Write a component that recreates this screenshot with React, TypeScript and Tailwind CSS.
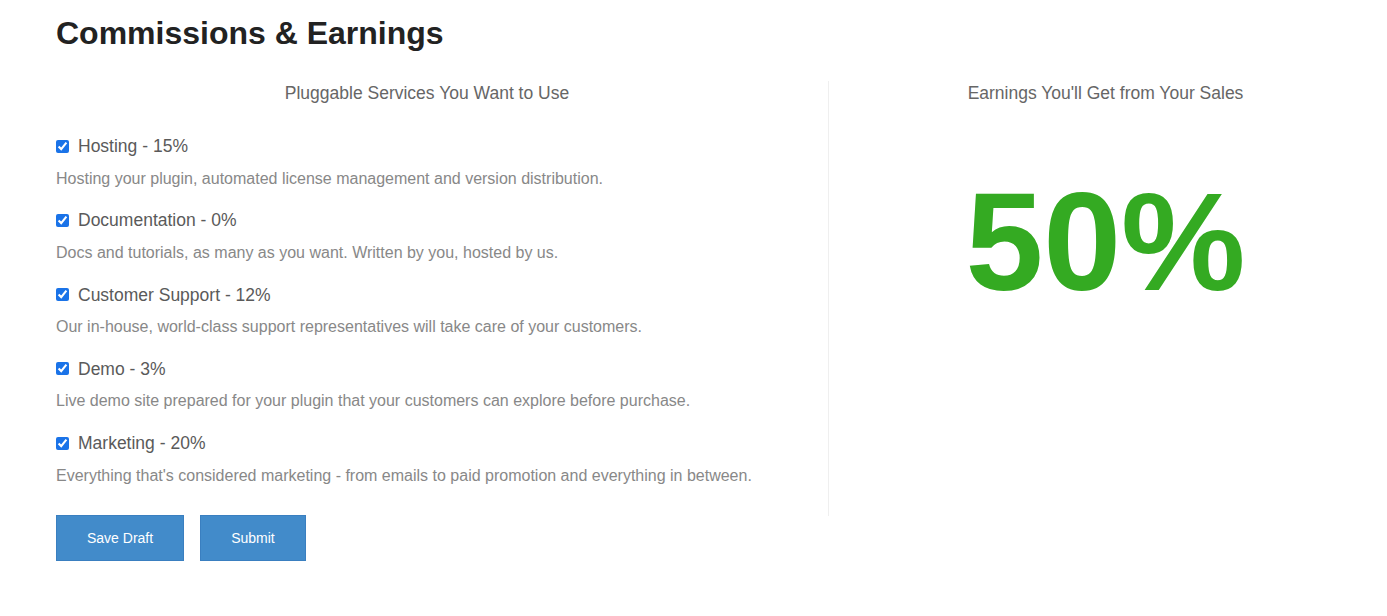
import React, { useState } from "react";

const services = [
  { name: "Hosting", pct: 15, desc: "Hosting your plugin, automated license management and version distribution." },
  { name: "Documentation", pct: 0, desc: "Docs and tutorials, as many as you want. Written by you, hosted by us." },
  { name: "Customer Support", pct: 12, desc: "Our in-house, world-class support representatives will take care of your customers." },
  { name: "Demo", pct: 3, desc: "Live demo site prepared for your plugin that your customers can explore before purchase." },
  { name: "Marketing", pct: 20, desc: "Everything that's considered marketing - from emails to paid promotion and everything in between." },
];

export default function App() {
  const [checked, setChecked] = useState<boolean[]>(services.map(() => true));

  return (
    <div className="min-h-[616px] bg-white px-[56px] pt-[14px] font-['Liberation_Sans',Arial,sans-serif]">
      <h1 className="text-[32px] font-bold leading-[38px] text-[#222]">Commissions &amp; Earnings</h1>

      <div className="mt-[29px] flex">
        {/* services column */}
        <div className="w-[742px]">
          <h3 className="text-center text-[17.5px] leading-[24px] text-[#666]">Pluggable Services You Want to Use</h3>

          <div className="mt-[29px] flex flex-col">
            {services.map((s, i) => (
              <div key={s.name} className="flex flex-col">
                <label className="flex items-center gap-[9px] text-[17.5px] leading-[24px] text-[#5a5a5a]">
                  <input
                    type="checkbox"
                    checked={checked[i]}
                    onChange={() => setChecked(checked.map((c, j) => (j === i ? !c : c)))}
                    className="m-0 h-[13px] w-[13px] accent-[#1a73e8]"
                  />
                  {s.name} - {s.pct}%
                </label>
                <p className="mt-[8.5px] mb-[17.75px] text-[16px] leading-[24px] text-[#888]">{s.desc}</p>
              </div>
            ))}
          </div>

          <div className="mt-[10px] flex gap-[16px]">
            <button className="h-[46px] border border-[#3a7fc0] bg-[#428bca] px-[30px] text-[14px] text-white">
              Save Draft
            </button>
            <button className="h-[46px] border border-[#3a7fc0] bg-[#428bca] px-[30px] text-[14px] text-white">
              Submit
            </button>
          </div>
        </div>

        <div className="ml-[30px] mb-[45px] w-px bg-[#efefef]" />

        {/* earnings column */}
        <div className="flex-1 pl-[51px]">
          <h3 className="text-center text-[17.5px] leading-[24px] text-[#666]">Earnings You'll Get from Your Sales</h3>
          <div className="mt-[57px] text-center text-[140px] font-bold leading-[160px] text-[#34aa22]">50%</div>
        </div>
      </div>
    </div>
  );
}
